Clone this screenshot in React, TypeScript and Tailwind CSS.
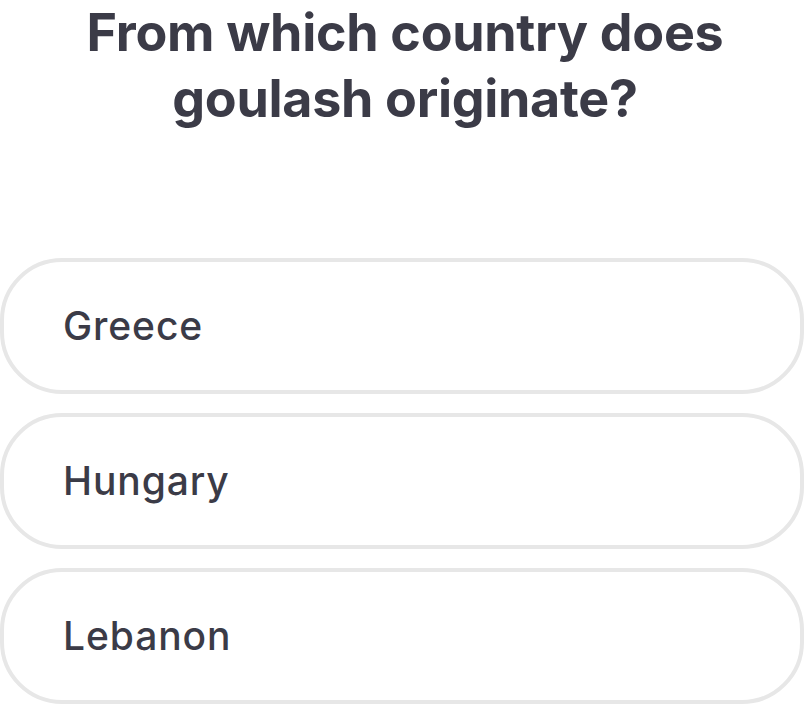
import React from "react";

const options = ["Greece", "Hungary", "Lebanon"];

export default function App() {
  return (
    <div className="w-[810px] h-[720px] bg-white overflow-hidden" style={{ fontFamily: "Inter, 'Noto Sans', sans-serif" }}>
      <h1 className="text-center text-[52px] leading-[66px] font-bold text-[#3b3b47] tracking-[-0.3px]">
        From which country does
        <br />
        goulash originate?
      </h1>
      <div className="mt-[126px] flex flex-col gap-[19px] w-[804px]">
        {options.map((o) => (
          <div
            key={o}
            className="h-[136px] rounded-[62px] border-[4px] border-[#e7e7e7] bg-white flex items-center pl-[59px]"
          >
            <span className="text-[39px] font-medium text-[#3b3b47] tracking-[0.9px]">{o}</span>
          </div>
        ))}
      </div>
    </div>
  );
}
